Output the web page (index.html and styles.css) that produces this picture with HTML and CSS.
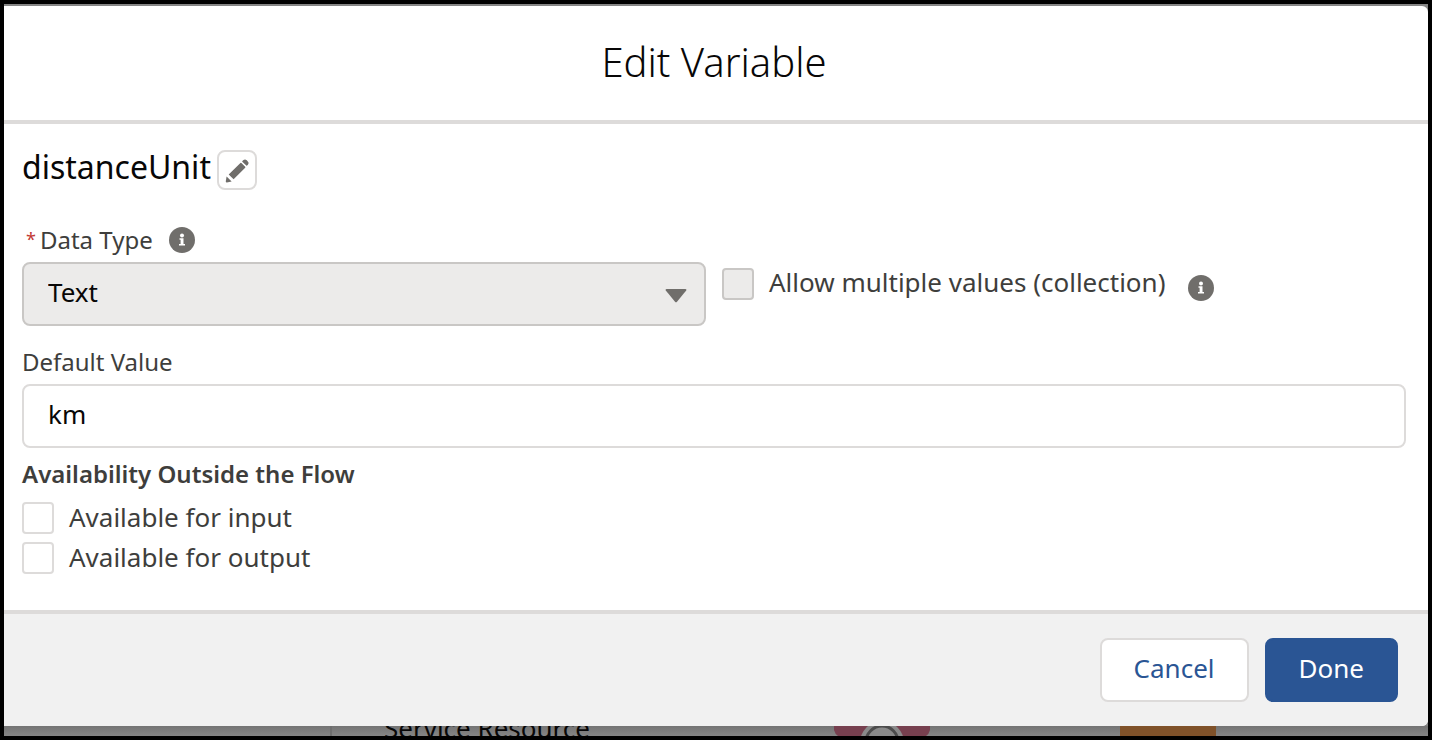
FILE: index.html
```
<!DOCTYPE html>
<html lang="en">
<head>
<meta charset="UTF-8">
<meta name="viewport" content="width=device-width, initial-scale=1.0">
<title>Edit Variable</title>
<link rel="stylesheet" href="styles.css">
</head>
<body>
    <div class="frame">
        <section class="modal" role="dialog" aria-labelledby="modalTitle">
            <header class="modal-header">
                <h1 id="modalTitle">Edit Variable</h1>
            </header>

            <form class="modal-body">
                <div class="name-row">
                    <h2>distanceUnit</h2>
                    <button type="button" class="icon-button" aria-label="Edit name">
                        <svg viewBox="0 0 24 24" width="24" height="24" fill="#706e6b">
                            <path d="M1.6 17.5 6.6 22.400 1.900 23.400Q.6 23.600 .8 22.300Z"/>
                            <path d="M3.700 15.400 15.400 3.900Q15.900 3.500 16.400 4L20.200 7.800Q20.600 8.300 20.200 8.700L8.600 20.300Z"/>
                            <path d="M17.400 2 18.500 1Q20.200-.2 21.800 1.300L22.800 2.400Q24.300 4 22.900 5.700L22.100 6.500Q21.700 6.900 21.300 6.500L17.500 2.900Q17 2.500 17.400 2Z"/>
                        </svg>
                    </button>
                </div>

                <!-- data type and collection -->
                <div class="type-row">
                    <div class="field">
                        <div class="label-row">
                            <label for="dataType"><abbr class="required" title="required">*</abbr>Data Type</label>
                            <svg class="info" viewBox="0 0 26 26" width="26" height="26">
                                <circle cx="13" cy="13" r="13" fill="#706e6b"/>
                                <circle cx="13" cy="8.500" r="2" fill="#fff"/>
                                <path d="M10.500 11.300H14.500V17H16V18.500H10V17H11.600V12.800H10.500Z" fill="#fff"/>
                            </svg>
                        </div>
                        <div class="select-wrap">
                            <select id="dataType" class="control" disabled>
                                <option>Text</option>
                            </select>
                            <svg class="arrow" viewBox="0 0 22 14" width="22" height="14">
                                <path d="M1.500 0H20.500Q22 .2 21.200 1.500L12 12.800Q11 13.800 10 12.800L.8 1.500Q0 .2 1.500 0Z" fill="#706e6b"/>
                            </svg>
                        </div>
                    </div>
                    <div class="check-row collection">
                        <input type="checkbox" id="collection" disabled>
                        <label for="collection">Allow multiple values (collection)</label>
                        <svg class="info" viewBox="0 0 26 26" width="26" height="26">
                            <circle cx="13" cy="13" r="13" fill="#706e6b"/>
                            <circle cx="13" cy="8.500" r="2" fill="#fff"/>
                            <path d="M10.500 11.300H14.500V17H16V18.500H10V17H11.600V12.800H10.500Z" fill="#fff"/>
                        </svg>
                    </div>
                </div>

                <div class="field default-field">
                    <label for="defaultValue">Default Value</label>
                    <input type="text" id="defaultValue" class="control" value="km">
                </div>

                <fieldset class="availability">
                    <legend>Availability Outside the Flow</legend>
                    <div class="check-row">
                        <input type="checkbox" id="forInput">
                        <label for="forInput">Available for input</label>
                    </div>
                    <div class="check-row">
                        <input type="checkbox" id="forOutput">
                        <label for="forOutput">Available for output</label>
                    </div>
                </fieldset>
            </form>

            <footer class="modal-footer">
                <button type="button" class="btn">Cancel</button>
                <button type="button" class="btn btn-brand">Done</button>
            </footer>
        </section>

        <!-- flow canvas showing under the modal -->
        <div class="canvas">
            <div class="canvas-panel"></div>
            <div class="canvas-label">Service Resource</div>
            <svg class="node" viewBox="0 0 96 10" width="96" height="10">
                <path d="M0 0H96V4Q95 8 92 10H4Q1 8 0 4Z" fill="#77404f"/>
                <circle cx="48" cy="17" r="22" fill="#8a8a8a"/>
                <circle cx="48" cy="16" r="16" fill="none" stroke="#4c4c4c" stroke-width="3"/>
            </svg>
            <div class="node node-orange"></div>
        </div>
    </div>
</body>
</html>
```
FILE: styles.css
```
* {
    box-sizing: border-box;
}

body {
    margin: 0;
    font-family: "Noto Sans", "Open Sans", sans-serif;
    font-size: 26px;
    color: #3e3e3c;
    background-color: #000;
}

.frame {
    display: flex;
    flex-direction: column;
    min-height: 100vh;
    padding-top: 2px;
    border: 4px solid #000;
    background-color: #858585;
}

.modal {
    flex: 1;
    display: flex;
    flex-direction: column;
    background-color: #fff;
    border-radius: 0 6px 6px 0;
    overflow: hidden;
}

.modal-header {
    padding: 28px 22px 30px 18px;
    text-align: center;
    border-bottom: 4px solid #dddbda;
}

h1 {
    margin: 0;
    font-size: 40px;
    font-weight: 300;
    line-height: 56px;
    color: #080707;
}

.modal-body {
    flex: 1;
    padding: 24px 22px 24px 18px;
}

.name-row {
    display: flex;
    align-items: center;
    gap: 6px;
    height: 44px;
}

h2 {
    margin: 0;
    padding-bottom: 6px;
    font-size: 32px;
    font-weight: 400;
    line-height: 38px;
    color: #080707;
}

.icon-button {
    display: flex;
    align-items: center;
    justify-content: center;
    width: 40px;
    height: 40px;
    padding: 2px 0 0;
    border: 2px solid #dddbda;
    border-radius: 8px;
    background-color: #fff;
}

.type-row {
    display: grid;
    grid-template-columns: 1fr 1fr;
    gap: 16px;
    margin-top: 32px;
}

.label-row {
    display: flex;
    align-items: center;
    gap: 16px;
    height: 32px;
    padding-left: 4px;
}

.field label {
    display: block;
    font-size: 24px;
    line-height: 32px;
}

.required {
    margin-right: 4px;
    font-size: 18px;
    line-height: 1;
    vertical-align: 3px;
    color: #c23934;
    text-decoration: none;
}

.info {
    flex-shrink: 0;
}

.select-wrap {
    position: relative;
    margin-top: 6px;
}

.control {
    display: block;
    width: 100%;
    height: 64px;
    padding: 0 24px 4px;
    font-family: inherit;
    font-size: 26px;
    color: #080707;
    border: 2px solid #dddbda;
    border-radius: 8px;
    background-color: #fff;
}

select.control {
    appearance: none;
    opacity: 1;
    border-color: #c9c7c5;
    background-color: #ecebea;
}

.arrow {
    position: absolute;
    top: 27px;
    right: 19px;
    pointer-events: none;
}

.check-row {
    display: flex;
    align-items: center;
    gap: 15px;
    height: 40px;
}

.check-row label {
    padding-bottom: 2px;
    line-height: 32px;
}

.check-row input {
    appearance: none;
    flex-shrink: 0;
    width: 32px;
    height: 32px;
    margin: 0;
    border: 2px solid #dddbda;
    border-radius: 4px;
    background-color: #fff;
}

.check-row input:disabled {
    border-color: #c9c7c5;
    background-color: #ecebea;
}

.collection {
    margin-top: 40px;
}

.collection label {
    padding-bottom: 4px;
}

.collection .info {
    margin-top: 8px;
    margin-left: 8px;
}

.default-field {
    margin-top: 20px;
}

.default-field .control {
    margin-top: 6px;
}

.availability {
    margin: 10px 0 0;
    padding: 0;
    border: 0;
}

legend {
    margin-bottom: 8px;
    padding: 0;
    font-size: 24px;
    font-weight: 600;
    line-height: 32px;
}

.modal-footer {
    display: flex;
    justify-content: flex-end;
    gap: 16px;
    padding: 24px 30px;
    border-top: 4px solid #dddbda;
    background-color: #f1f1f1;
}

.btn {
    height: 64px;
    padding: 0 32px 4px;
    font-family: inherit;
    font-size: 26px;
    color: #2a5594;
    border: 2px solid #dddbda;
    border-radius: 8px;
    background-color: #fff;
}

.btn-brand {
    color: #fff;
    border-color: #2a5594;
    background-color: #2a5594;
}

.canvas {
    display: grid;
    grid-template-columns: 328px 502px 286px 1fr;
    height: 10px;
    overflow: hidden;
    background-image: linear-gradient(#747474, #858585);
}

.canvas-panel {
    border-right: 2px solid #6f6f6f;
}

.canvas-label {
    padding-left: 52px;
    margin-top: -18px;
    line-height: 40px;
    color: #080707;
}

.node-orange {
    width: 96px;
    background-color: #80522a;
}
```
